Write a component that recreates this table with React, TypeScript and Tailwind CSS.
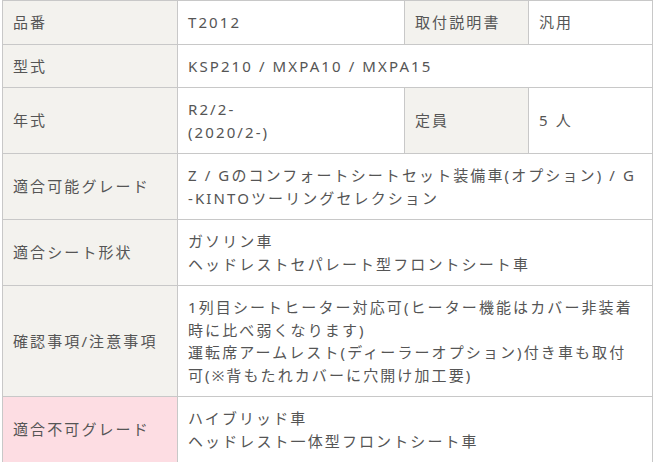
import React from 'react'

const label = 'border border-[#c8c8c8] bg-[#f3f2ee] px-[10px] py-[10px] text-left align-middle font-normal'
const cell = 'border border-[#c8c8c8] bg-white px-[10px] py-[10px] text-left align-middle'

export default function App() {
  return (
    <div
      className="bg-white min-h-screen pl-[2px] text-[15px] leading-[22.5px] tracking-[0.14em] text-[#555]"
      style={{ fontFamily: '"Noto Sans", "Noto Sans CJK JP", sans-serif' }}
    >
      <table className="border-collapse table-fixed w-[650px]">
        <colgroup>
          <col className="w-[175px]" />
          <col className="w-[227px]" />
          <col className="w-[124px]" />
          <col className="w-[124px]" />
        </colgroup>
        <tbody>
          <tr>
            <th className={label}>品番</th>
            <td className={cell}>T2012</td>
            <th className={label}>取付説明書</th>
            <td className={cell}>汎用</td>
          </tr>
          <tr>
            <th className={label}>型式</th>
            <td className={cell} colSpan={3}>KSP210 / MXPA10 / MXPA15</td>
          </tr>
          <tr>
            <th className={label}>年式</th>
            <td className={cell}>
              R2/2-
              <br />
              (2020/2-)
            </td>
            <th className={label}>定員</th>
            <td className={cell}>5 人</td>
          </tr>
          <tr>
            <th className={label}>適合可能グレード</th>
            <td className={`${cell} whitespace-nowrap`} colSpan={3}>
              Z / Gのコンフォートシートセット装備車(オプション) / G
              <br />
              -KINTOツーリングセレクション
            </td>
          </tr>
          <tr>
            <th className={label}>適合シート形状</th>
            <td className={cell} colSpan={3}>
              ガソリン車
              <br />
              ヘッドレストセパレート型フロントシート車
            </td>
          </tr>
          <tr>
            <th className={label}>確認事項/注意事項</th>
            <td className={`${cell} whitespace-nowrap`} colSpan={3}>
              1列目シートヒーター対応可(ヒーター機能はカバー非装着
              <br />
              時に比べ弱くなります)
              <br />
              運転席アームレスト(ディーラーオプション)付き車も取付
              <br />
              可(※背もたれカバーに穴開け加工要)
            </td>
          </tr>
          <tr>
            <th className="border border-[#c8c8c8] bg-[#fddde3] px-[10px] py-[10px] text-left align-middle font-normal">
              適合不可グレード
            </th>
            <td className={cell} colSpan={3}>
              ハイブリッド車
              <br />
              ヘッドレスト一体型フロントシート車
            </td>
          </tr>
        </tbody>
      </table>
    </div>
  )
}
